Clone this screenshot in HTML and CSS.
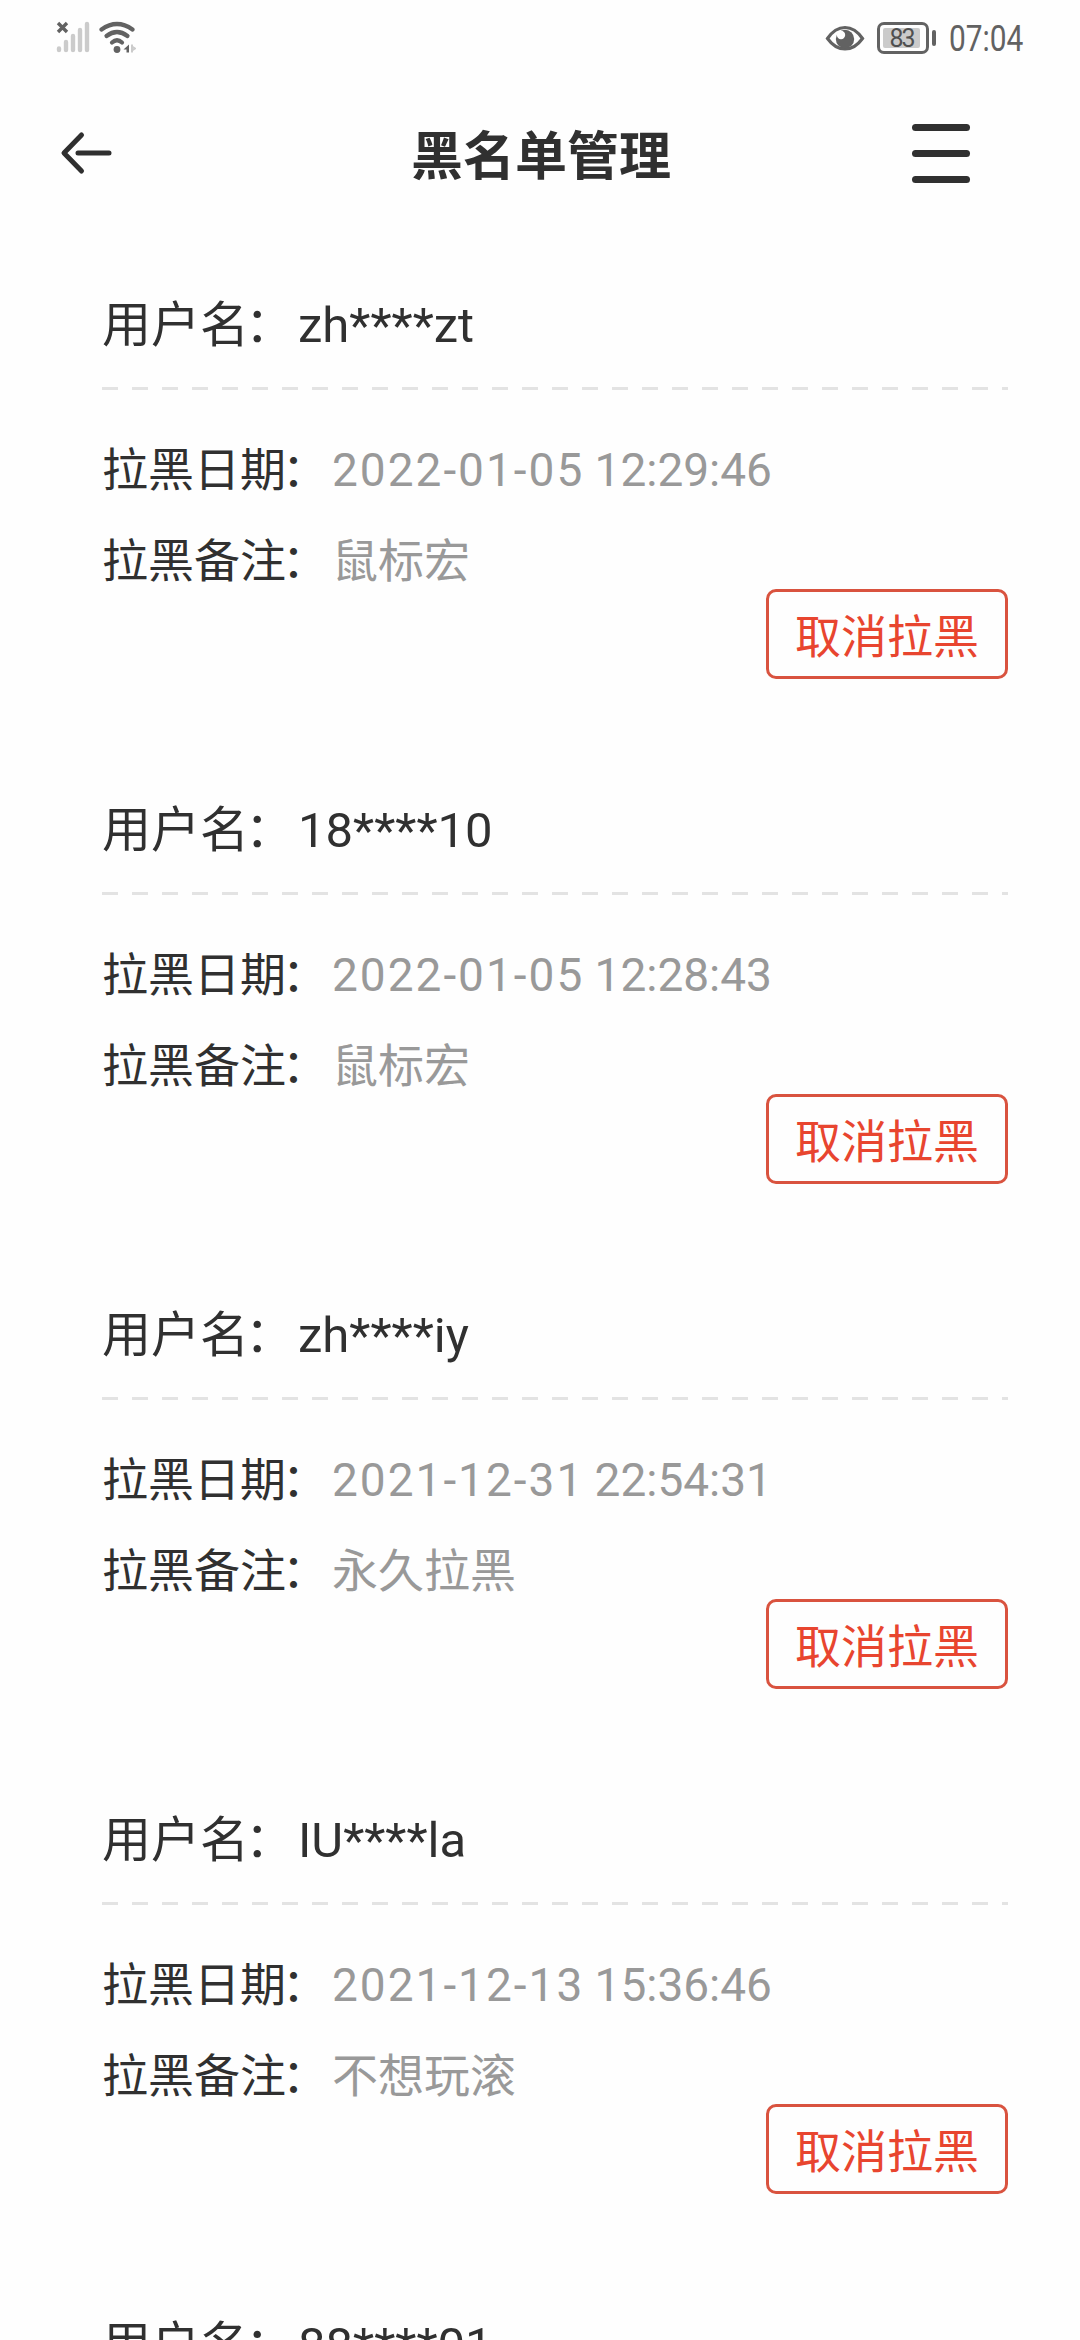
FILE: index.html
```
<!DOCTYPE html>
<html lang="zh-CN">
<head>
  <meta charset="UTF-8">
  <title>黑名单管理</title>
  <link rel="stylesheet" href="styles.css">
</head>
<body>
  <div class="status-bar">
    <svg class="signal" width="80" height="40" viewBox="56 16 80 40">
      <g stroke="#626262" stroke-width="3.4" fill="none">
        <path d="M58 23l9 9M67 23l-9 9"/>
      </g>
      <g stroke="#cbcbcb" stroke-width="4.4" stroke-linecap="round">
        <path d="M59 48.5v1.5M66 42v8M73 36v14M80 30v20M87 24v26"/>
      </g>
      <g stroke="#626262" stroke-width="4.2" stroke-linecap="round" fill="none">
        <path d="M101.500 29.500Q117 18.500 132.500 29.500"/>
        <path d="M106.500 36Q117 28 127.500 36"/>
        <path d="M112 42.500Q117 38 122 42.500"/>
      </g>
      <circle cx="117" cy="49.500" r="3.400" fill="#626262"/>
      <path d="M129 44.500v8h-2.500v-3h-3z" fill="#626262"/>
      <path d="M132 44.500v8M132 46.500l3 2-3 2" stroke="#cbcbcb" stroke-width="2" fill="none"/>
    </svg>
    <div class="status-right">
      <svg width="40" height="30" viewBox="0 0 40 30">
        <path d="M2.500 15.500Q10 4.500 20 4.500T37.500 15.500Q30 26 20 26T2.500 15.500z" fill="none" stroke="#626262" stroke-width="3.200"/>
        <circle cx="20" cy="16" r="9.200" fill="#626262"/>
        <circle cx="16" cy="12" r="4.200" fill="#fefefe"/>
      </svg>
      <div class="battery"><span>83</span></div>
      <div class="battery-tip"></div>
      <div class="clock">07:04</div>
    </div>
  </div>

  <div class="navbar">
    <svg class="back" width="52" height="44" viewBox="0 0 52 44">
      <path d="M21.500 4L4 22l17.500 18M18 22h31" fill="none" stroke="#2f2f2f" stroke-width="5" stroke-linecap="round" stroke-linejoin="round"/>
    </svg>
    <h1>黑名单管理</h1>
    <div class="menu">
      <span></span>
      <span></span>
      <span></span>
    </div>
  </div>

  <div class="list">
    <div class="item">
      <div class="user">用户名<i>：</i><span>zh****zt</span></div>
      <div class="line"></div>
      <div class="info">拉黑日期<i>：</i><span class="date">2022-01-05</span> <span class="time">12:29:46</span></div>
      <div class="info">拉黑备注<i>：</i><span>鼠标宏</span></div>
      <button>取消拉黑</button>
    </div>

    <div class="item">
      <div class="user">用户名<i>：</i><span>18****10</span></div>
      <div class="line"></div>
      <div class="info">拉黑日期<i>：</i><span class="date">2022-01-05</span> <span class="time">12:28:43</span></div>
      <div class="info">拉黑备注<i>：</i><span>鼠标宏</span></div>
      <button>取消拉黑</button>
    </div>

    <div class="item">
      <div class="user">用户名<i>：</i><span>zh****iy</span></div>
      <div class="line"></div>
      <div class="info">拉黑日期<i>：</i><span class="date">2021-12-31</span> <span class="time">22:54:31</span></div>
      <div class="info">拉黑备注<i>：</i><span>永久拉黑</span></div>
      <button>取消拉黑</button>
    </div>

    <div class="item">
      <div class="user">用户名<i>：</i><span>IU****la</span></div>
      <div class="line"></div>
      <div class="info">拉黑日期<i>：</i><span class="date">2021-12-13</span> <span class="time">15:36:46</span></div>
      <div class="info">拉黑备注<i>：</i><span>不想玩滚</span></div>
      <button>取消拉黑</button>
    </div>

    <div class="item">
      <div class="user">用户名<i>：</i><span>88****01</span></div>
    </div>
  </div>
</body>
</html>
```
FILE: styles.css
```
* {
  box-sizing: border-box;
}

body {
  margin: 0;
  height: 2340px;
  overflow: hidden;
  background-color: #fefefe;
  color: #303030;
  font-family: "Noto Sans CJK SC", sans-serif;
}

.status-bar {
  display: flex;
  justify-content: space-between;
  height: 75px;
  padding: 16px 57px 0 56px;
}

.status-right {
  display: flex;
  align-items: center;
  height: 43px;
}

.battery {
  display: flex;
  width: 52px;
  height: 32px;
  margin-left: 12px;
  padding: 3px;
  border: 3px solid #626262;
  border-radius: 7px;
}

.battery span {
  width: 37px;
  height: 20px;
  border-radius: 2px;
  background-color: #cbcbcb;
  color: #505050;
  font-family: Roboto, sans-serif;
  font-size: 25px;
  line-height: 21px;
  letter-spacing: -2px;
  text-align: center;
}

.battery-tip {
  width: 4px;
  height: 16px;
  margin-left: 3px;
  border-radius: 2px;
  background-color: #626262;
}

.clock {
  width: 74px;
  margin-left: 13px;
  padding-top: 2px;
  color: #626262;
  font-family: Roboto, sans-serif;
  font-size: 36px;
  line-height: 42px;
  transform: scaleX(0.83);
  transform-origin: left;
}

.navbar {
  display: flex;
  align-items: center;
  justify-content: space-between;
  height: 156px;
  padding: 0 110px 0 60px;
}

.back {
  margin-right: 58px;
}

.navbar h1 {
  margin: 0;
  font-size: 52px;
  font-weight: 700;
  line-height: 72px;
}

.menu {
  display: flex;
  flex-direction: column;
  justify-content: space-between;
  width: 58px;
  height: 59px;
}

.menu span {
  height: 7px;
  border-radius: 4px;
  background-color: #303030;
}

.list {
  padding: 21px 72px 0 102px;
}

.item {
  display: flex;
  flex-direction: column;
  height: 505px;
}

.user {
  height: 135px;
  padding-top: 37px;
  font-size: 49px;
  line-height: 64px;
}

/* 冒号略微左移 */
.item i {
  margin-left: -4px;
  margin-right: 4px;
  font-style: normal;
}

.user span {
  font-family: Roboto, sans-serif;
}

.line {
  height: 3px;
  margin-bottom: 46px;
  background: repeating-linear-gradient(90deg, #e3e3e3 0, #e3e3e3 16px, transparent 16px, transparent 30px);
}

.info {
  height: 60px;
  margin-bottom: 31px;
  font-size: 46px;
  line-height: 60px;
}

.info span {
  color: #999;
}

.info .date,
.info .time {
  font-family: Roboto, sans-serif;
}

.info .date {
  letter-spacing: 2px;
}

button {
  align-self: flex-end;
  width: 242px;
  height: 90px;
  margin-top: -29px;
  padding: 0 0 2px;
  border: 3px solid #d9533f;
  border-radius: 10px;
  background-color: transparent;
  color: #e8452f;
  font-family: "Noto Sans CJK SC", sans-serif;
  font-size: 46px;
  line-height: 82px;
}
```
